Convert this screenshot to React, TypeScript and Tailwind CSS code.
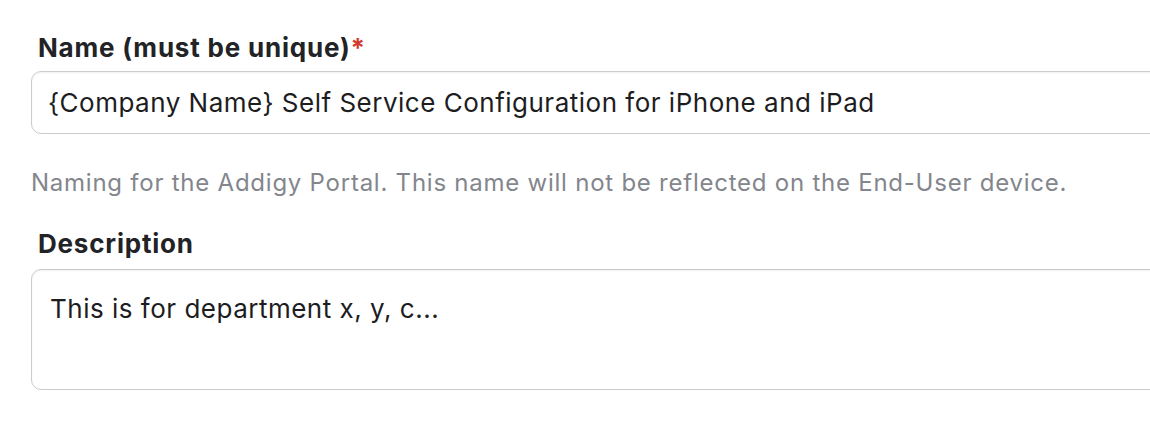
export default function App() {
  return (
    <div className="h-[434px] w-[1150px] overflow-hidden bg-white pl-[31px] pt-[32px] font-['Inter',sans-serif]">
      <div className="pl-[7px] text-[26px] font-bold leading-[32px] tracking-[0.8px] text-[#222326]">
        Name (must be unique)<span className="text-[#d23b2f]">*</span>
      </div>
      <div className="mt-[7px] flex h-[63px] w-[1160px] items-center rounded-[10px] border border-[#c9cbcf] bg-white pl-[16px] text-[26px] leading-[32px] tracking-[0.5px] text-[#1d1d1f] shadow-[inset_0_1px_2px_rgba(0,0,0,0.06)]">
        {'{Company Name} Self Service Configuration for iPhone and iPad'}
      </div>
      <p className="mt-[33px] text-[24px] leading-[32px] tracking-[0.76px] text-[#83868c]">
        Naming for the Addigy Portal. This name will not be reflected on the End-User device.
      </p>
      <div className="mt-[29px] pl-[7px] text-[26px] font-bold leading-[32px] tracking-[0.8px] text-[#222326]">
        Description
      </div>
      <div className="mt-[9px] h-[121px] w-[1160px] rounded-[10px] border border-[#c9cbcf] bg-white pl-[18px] pt-[23px] text-[26px] leading-[32px] tracking-[0.5px] text-[#1d1d1f] shadow-[inset_0_1px_2px_rgba(0,0,0,0.06)]">
        This is for department x, y, c...
      </div>
    </div>
  )
}
